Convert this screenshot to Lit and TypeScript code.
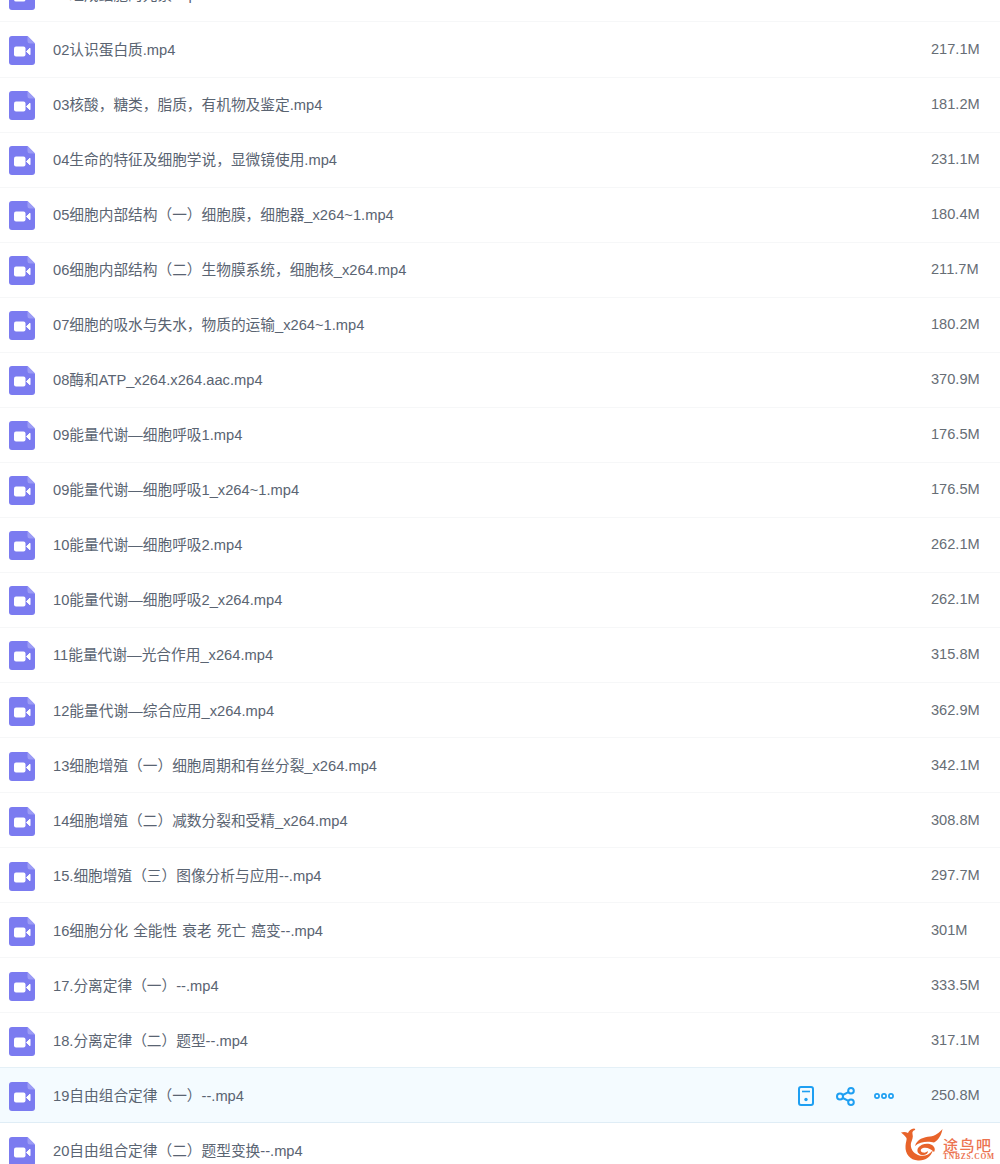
import { LitElement, html, css, svg } from "lit";
import { customElement } from "lit/decorators.js";

const rows: [string, string][] = [
  ["01组成细胞的元素.mp4", ""],
  ["02认识蛋白质.mp4", "217.1M"],
  ["03核酸，糖类，脂质，有机物及鉴定.mp4", "181.2M"],
  ["04生命的特征及细胞学说，显微镜使用.mp4", "231.1M"],
  ["05细胞内部结构（一）细胞膜，细胞器_x264~1.mp4", "180.4M"],
  ["06细胞内部结构（二）生物膜系统，细胞核_x264.mp4", "211.7M"],
  ["07细胞的吸水与失水，物质的运输_x264~1.mp4", "180.2M"],
  ["08酶和ATP_x264.x264.aac.mp4", "370.9M"],
  ["09能量代谢—细胞呼吸1.mp4", "176.5M"],
  ["09能量代谢—细胞呼吸1_x264~1.mp4", "176.5M"],
  ["10能量代谢—细胞呼吸2.mp4", "262.1M"],
  ["10能量代谢—细胞呼吸2_x264.mp4", "262.1M"],
  ["11能量代谢—光合作用_x264.mp4", "315.8M"],
  ["12能量代谢—综合应用_x264.mp4", "362.9M"],
  ["13细胞增殖（一）细胞周期和有丝分裂_x264.mp4", "342.1M"],
  ["14细胞增殖（二）减数分裂和受精_x264.mp4", "308.8M"],
  ["15.细胞增殖（三）图像分析与应用--.mp4", "297.7M"],
  ["16细胞分化 全能性 衰老 死亡 癌变--.mp4", "301M"],
  ["17.分离定律（一）--.mp4", "333.5M"],
  ["18.分离定律（二）题型--.mp4", "317.1M"],
  ["19自由组合定律（一）--.mp4", "250.8M"],
  ["20自由组合定律（二）题型变换--.mp4", ""],
];

const fileIcon = svg`<svg class="file" viewBox="0 0 26 29" width="26" height="29">
  <path d="M3 0H18.5L26 7.5V26a3 3 0 0 1-3 3H3a3 3 0 0 1-3-3V3a3 3 0 0 1 3-3Z" fill="#7b7bf0"/>
  <path d="M18.5 0L26 7.5H21a2.5 2.5 0 0 1-2.5-2.5Z" fill="#9c9cf5"/>
  <rect x="5" y="10.5" width="11.5" height="10" rx="2" fill="#fff"/>
  <path d="M17.5 15.5L21 12.2V18.8Z" fill="#fff" stroke="#fff" stroke-width="1" stroke-linejoin="round"/>
</svg>`;

const phone = svg`<svg viewBox="0 0 16 20" width="16" height="20" fill="none" stroke="#1e9ff2" stroke-width="2">
  <rect x="1" y="1" width="14" height="18" rx="2"/>
  <path d="M4 5.5H12" stroke-width="1.6"/>
  <circle cx="8" cy="13.5" r="1.7" fill="#1e9ff2" stroke="none"/>
</svg>`;

const share = svg`<svg viewBox="0 0 19 19" width="19" height="19" fill="none" stroke="#1e9ff2" stroke-width="2">
  <circle cx="4" cy="9.5" r="3"/>
  <circle cx="15" cy="3.8" r="2.8"/>
  <circle cx="15" cy="15.2" r="2.8"/>
  <path d="M6.8 8L12.4 5.2M6.8 11L12.4 13.8"/>
</svg>`;

const dots = svg`<svg viewBox="0 0 20 6" width="20" height="6" fill="none" stroke="#1e9ff2" stroke-width="1.7">
  <circle cx="3" cy="3" r="2.1"/><circle cx="10" cy="3" r="2.1"/><circle cx="17" cy="3" r="2.1"/>
</svg>`;

const mark = svg`<svg viewBox="0 0 43 34" width="43" height="34">
  <path d="M1 4.5C4 3.5 6 4 8 5C9 2.5 11 1 14 0.5C15 0.5 15.5 1.5 15 2C13 2.5 12 4 12.5 6C13.5 9 12 12 11 15C10 20 13 25 18 27C23 29 29 27.5 33 22C31 29 25 33 18 32.5C10 32 5 26 5.5 18C5.7 14 7 12 6.5 10C5 8 3 6 1 4.5Z" fill="#e8632a"/>
  <path d="M15 18C17 11 24 9 30 8.5C35 8 39 5 42.5 1C41.5 7 38.5 12 34 14.5C29 13 20 13 15 18Z" fill="#e8632a"/>
  <path d="M18 20C21 15.5 28 14.5 32 17C35 19 35.5 22 34 24C31 21 27 19 23 20C20 21 20 24 23 24.5C25 25 27 24 28 23C28 26 25 27.5 22 27C18 26.5 16.5 23 18 20Z" fill="#e8632a"/>
</svg>`;

@customElement("app-root")
export class AppRoot extends LitElement {
  static styles = css`
    :host { display: block; height: 1164px; overflow: hidden; background: #fff;
      font-family: "Liberation Sans", "Noto Sans CJK SC", sans-serif; font-size: 14.7px; color: #5a6472; }
    .page { position: relative; height: 1164px; overflow: hidden; }
    .list { margin-top: -32.6px; display: flex; flex-direction: column; }
    .row { height: 55.05px; box-sizing: border-box; display: flex; align-items: center;
      padding-left: 9px; border-bottom: 1px solid #f6f7f8; flex: none; }
    .row.active { background: #f4fbff; border-top: 1px solid #e4f0f7; border-bottom: 1px solid #dfedf6;
      margin-top: -1px; height: 56.05px; }
    .file { flex: none; margin-top: 2px; }
    .name { margin-left: 18px; flex: 1; white-space: nowrap; margin-top: -2px; word-spacing: 1px; }
    .actions { display: flex; align-items: center; width: 111px; margin-right: 22px; margin-top: 2px; }
    .actions svg { display: block; }
    .a1 { width: 38px; }
    .a2 { width: 38px; }
    .size { width: 69px; flex: none; color: #666d75; margin-top: -1px; font-size: 14.6px; }
    .wm { position: absolute; left: 900px; top: 1128px; display: flex; align-items: flex-start; }
    .wm-t { display: flex; flex-direction: column; margin-top: 9px; }
    .wm-c { font-family: "Noto Sans CJK SC", sans-serif; font-size: 15px; line-height: 15px; letter-spacing: 1.5px; font-weight: 500; color: #ec7350; }
    .wm-e { font-family: "Liberation Serif", serif; font-size: 7.5px; line-height: 7px; font-weight: 700; letter-spacing: .8px; color: #ec7350; margin-top: 1px; }
  `;

  render() {
    return html`<div class="page">
      <div class="list">
        ${rows.map(([n, s], i) => html`<div class="row ${i === 20 ? "active" : ""}">
          ${fileIcon}
          <div class="name">${n}</div>
          ${i === 20 ? html`<div class="actions">
            <div class="a1">${phone}</div><div class="a2">${share}</div><div>${dots}</div>
          </div>` : ""}
          <div class="size">${s}</div>
        </div>`)}
      </div>
      <div class="wm">${mark}<div class="wm-t"><span class="wm-c">途鸟吧</span><span class="wm-e">TNBZS.COM</span></div></div>
    </div>`;
  }
}
